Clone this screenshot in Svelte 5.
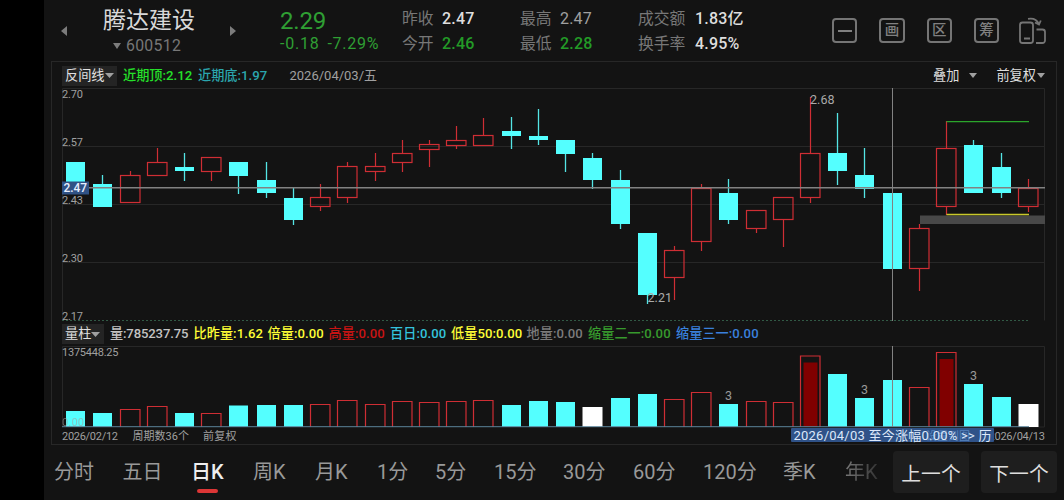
<script lang="ts">
type Candle = {
	high: number;
	top: number;
	bottom: number;
	low: number;
	up: boolean;
};

const STEP = 27.22;
const FIRST = 75.6;
const BASE = 427;
const cx = (i: number) => Math.floor(FIRST + i * STEP) + 0.5;

// d = falling (filled), u = rising (outlined); high, top, bottom, low on the canvas
const candles: Candle[] = [
	"d 162 162 184 184",
	"d 175 184 207 207",
	"u 171 175 203 203",
	"u 148 162 176 176",
	"d 153 167 171 181",
	"u 157 157 172 181",
	"d 162 162 176 194",
	"d 162 180 193 198",
	"d 188 198 220 225",
	"u 184 197 207 211",
	"u 162 166 198 203",
	"u 153 166 172 181",
	"u 140 153 163 172",
	"u 140 144 150 167",
	"u 126 140 146 149",
	"u 118 135 146 146",
	"d 117 131 136 149",
	"d 109 136 140 145",
	"d 140 140 154 172",
	"d 153 158 180 189",
	"d 170 180 224 229",
	"d 233 233 295 304",
	"u 246 250 278 300",
	"u 184 188 242 251",
	"d 179 193 220 224",
	"u 210 210 229 233",
	"u 197 197 220 247",
	"u 97 153 198 203",
	"d 113 153 171 185",
	"d 148 175 189 198",
	"d 193 193 269 269",
	"u 224 228 269 291",
	"u 121 148 207 215",
	"d 140 145 193 193",
	"d 153 167 193 198",
	"u 179 188 207 212",
].map((row) => {
	const [kind, ...rest] = row.split(" ");
	const [high, top, bottom, low] = rest.map(Number);
	return { high, top, bottom, low, up: kind === "u" };
});

const volumeTops = [
	411, 413, 409, 406, 413, 413, 405.5, 405, 405, 404, 400, 404, 401, 402, 401,
	400, 405, 401, 402, 407, 398, 394, 399, 392, 404, 401, 402, 355.5, 374, 398,
	380, 387, 352, 384, 397, 404,
];
const whiteBars = [19, 35];
const solidBars = [27, 32];
const marked = [24, 29, 33];

const prices = [
	{ text: "2.70", y: 98 },
	{ text: "2.57", y: 145.5 },
	{ text: "2.43", y: 204 },
	{ text: "2.30", y: 262 },
	{ text: "2.17", y: 320 },
];

const legend = [
	{ text: "量:785237.75", color: "#c4c4c4" },
	{ text: "比昨量:1.62", color: "#ffff36" },
	{ text: "倍量:0.00", color: "#ffff36" },
	{ text: "高量:0.00", color: "#c81414" },
	{ text: "百日:0.00", color: "#34c3dc" },
	{ text: "低量50:0.00", color: "#ffff36" },
	{ text: "地量:0.00", color: "#7c7c7c" },
	{ text: "缩量二一:0.00", color: "#379a2d" },
	{ text: "缩量三一:0.00", color: "#3a80dc" },
];

const stats = [
	{ label: "昨收", value: "2.47", tone: "bright" },
	{ label: "最高", value: "2.47", tone: "" },
	{ label: "成交额", value: "1.83亿", tone: "bright" },
	{ label: "今开", value: "2.46", tone: "green" },
	{ label: "最低", value: "2.28", tone: "green" },
	{ label: "换手率", value: "4.95%", tone: "bright" },
];

const tabs = ["分时", "五日", "日K", "周K", "月K", "1分", "5分", "15分", "30分", "60分", "120分", "季K", "年K"];
let active = $state("日K");
</script>

<div class="app">
	<header>
		<svg class="prev" width="6" height="10" viewBox="0 0 6 10"><path d="M6 0v10L0 5z" /></svg>
		<div class="stock">
			<div class="name">腾达建设</div>
			<div class="code">
				<svg width="8" height="6" viewBox="0 0 8 6"><path d="M0 0h8L4 6z" /></svg>600512
			</div>
		</div>
		<svg class="next" width="6" height="10" viewBox="0 0 6 10"><path d="M0 0v10l6-5z" /></svg>
		<div class="quote">
			<div class="last">2.29</div>
			<div class="change"><span>-0.18</span><span>-7.29%</span></div>
		</div>
		<div class="stats">
			{#each stats as s}
				<span class="label">{s.label}</span>
				<span class="value {s.tone}">{s.value}</span>
			{/each}
		</div>
		<div class="tools">
			<button aria-label="收起"><i class="minus"></i></button>
			<button>画</button>
			<button>区</button>
			<button>筹</button>
			<svg class="rotate" width="30" height="28" viewBox="0 0 30 28">
				<rect x="2" y="5.5" width="13" height="20.5" rx="2.5" />
				<path d="M6 21.5h6M18.5 12.5h6a2.5 2.5 0 0 1 2.5 2.5v8.5a2.5 2.5 0 0 1-2.5 2.5h-6.5M10 1.8c6-1 9 .8 10.7 5M17 5.5l4 2 1.8-4" />
			</svg>
		</div>
	</header>

	<main>
		<div class="toolbar">
			<button class="picker">反间线<svg width="9" height="5" viewBox="0 0 9 5"><path d="M0 0h9L4.5 5z" /></svg></button>
			<span class="peak">近期顶:2.12</span>
			<span class="trough">近期底:1.97</span>
			<span class="date">2026/04/03/五</span>
			<span class="overlay">叠加<svg width="8" height="5" viewBox="0 0 8 5"><path d="M0 0h8L4 5z" /></svg></span>
			<span class="adjust">前复权<svg width="8" height="5" viewBox="0 0 8 5"><path d="M0 0h8L4 5z" /></svg></span>
		</div>

		<svg class="chart" width="1004" height="234" viewBox="52 88 1004 234">
			<path class="grid" d="M62.5 88.5H1044.5V320.5M62.5 88.5V320.5M62.5 146.5H1044M62.5 204.5H1044M62.5 262.5H1044" />
			<path class="floor" d="M62 320.5H1029" />
			<rect x="920" y="215.5" width="125" height="8.5" fill="#484848" />
			{#each candles as c, i}
				{#if c.up}
					<path class="up" d="M{cx(i)} {c.high}V{c.top}M{cx(i)} {c.bottom}V{c.low}" />
					<rect class="up" x={cx(i) - 10} y={c.top + 0.5} width="19.5" height={c.bottom - c.top - 1} />
				{:else}
					<path class="wick" d="M{cx(i)} {c.high}V{c.low}" />
					<rect class="down" x={cx(i) - 9.5} y={c.top} width="19" height={c.bottom - c.top} />
				{/if}
			{/each}
			<path d="M946.5 121.7H1029" stroke="#2ba52b" stroke-width="1.3" />
			<path d="M946.5 214.5H1029" stroke="#c8c82a" stroke-width="1.3" />
			<path class="cross" d="M62 187.7H1045" stroke-width="1.4" />
			<path class="cross" d="M892.5 88V321" />
			{#each prices as p}
				<text class="scale" x="62" y={p.y} textLength="21">{p.text}</text>
			{/each}
			<text class="extreme" x="810" y="104" textLength="24.5">2.68</text>
			<text class="extreme" x="647.5" y="302" textLength="24.5">2.21</text>
			<rect x="62" y="181.5" width="27" height="13" fill="#305285" />
			<text class="current" x="63.5" y="192.3" textLength="23.5">2.47</text>
		</svg>

		<div class="legend">
			<button class="picker">量柱<svg width="9" height="5" viewBox="0 0 9 5"><path d="M0 0h9L4.5 5z" /></svg></button>
			{#each legend as item}
				<span style="color: {item.color}">{item.text}</span>
			{/each}
		</div>

		<svg class="chart" width="1004" height="98" viewBox="52 346 1004 98">
			<path class="grid" d="M62.5 427V346.5H1044.5V427H1029" />
			{#each volumeTops as top, i}
				{#if whiteBars.includes(i)}
					<rect x={cx(i) - 10} y={top} width="20" height={BASE - top} fill="#fff" />
				{:else if candles[i].up}
					<path class="up" d="M{cx(i) - 10} {BASE}V{top + 0.5}h19.5V{BASE}" />
					{#if solidBars.includes(i)}
						<rect x={cx(i) - 7} y={top + 7} width="14" height={BASE - top - 7} fill="#800000" />
					{/if}
				{:else}
					<rect class="down" x={cx(i) - 9.5} y={top} width="19" height={BASE - top} />
				{/if}
				{#if marked.includes(i)}
					<text class="mark" x={cx(i)} y={top - 4}>3</text>
				{/if}
			{/each}
			<path d="M62 426.7H1029" stroke="#5b8399" />
			<path class="cross" d="M892.5 346V427" />
			<text class="scale" x="62" y="355.5" textLength="56.5">1375448.25</text>
			<text class="scale" x="62" y="425.5" textLength="22" opacity="0.6">0.00</text>
			<text class="scale" x="62" y="440" textLength="56">2026/02/12</text>
			<text class="scale" x="132.5" y="440" textLength="56.5">周期数36个</text>
			<text class="scale" x="203" y="440" textLength="33.5">前复权</text>
			<text class="scale" x="988.5" y="440" textLength="56.5">2026/04/13</text>
			<rect x="791" y="428" width="203" height="14" rx="1" fill="#2f5288" />
			<text class="ghost" x="926" y="439.5" textLength="44">设置到图</text>
			<text class="since" x="793.5" y="439.5" textLength="198">2026/04/03 至今涨幅0.00% &gt;&gt; 历</text>
		</svg>
	</main>

	<nav>
		{#each tabs as tab}
			<button class="tab" class:active={tab === active} class:faded={tab === "年K"} onclick={() => (active = tab)}>
				<span>{tab}</span>
			</button>
		{/each}
		<button class="jump">上一个</button>
		<button class="jump">下一个</button>
	</nav>
</div>

<style>
	:global(body) {
		background: #000;
	}
	.app {
		box-sizing: border-box;
		width: 1020px;
		height: 500px;
		margin-left: 44px;
		background: #131313;
		color: #c8c8c8;
		font-family: Roboto, "Noto Sans CJK SC", sans-serif;
		overflow: hidden;
	}
	button {
		margin: 0;
		padding: 0;
		border: 0;
		background: none;
		color: inherit;
		font: inherit;
		letter-spacing: inherit;
	}
	header {
		display: grid;
		grid-template-columns: 16px 103px 64px 41px 121px 352px 1fr;
		height: 61px;
	}
	header svg {
		fill: #7c7c7c;
	}
	.prev,
	.next {
		margin-top: 26px;
	}
	.prev {
		justify-self: end;
		margin-right: -7px;
	}
	.stock {
		margin-left: 43px;
		white-space: nowrap;
	}
	.next {
		margin-left: 67px;
	}
	.name {
		height: 36px;
		font-size: 23px;
		line-height: 42px;
		color: #d8d8d8;
	}
	.code {
		display: flex;
		align-items: center;
		gap: 5px;
		margin-left: 10px;
		font-size: 15.8px;
		line-height: 20px;
		letter-spacing: 0.3px;
		color: #777;
	}
	.quote {
		grid-column: 5;
		margin-left: 12px;
		color: #2f9f33;
		white-space: nowrap;
	}
	.last {
		height: 34px;
		font-size: 24px;
		line-height: 43px;
		letter-spacing: -0.2px;
	}
	.change {
		display: flex;
		gap: 8px;
		font-size: 16px;
		line-height: 20px;
		letter-spacing: 0.75px;
	}
	.stats {
		display: grid;
		grid-template-columns: 40px 78px 40px 78px 57px 60px;
		grid-template-rows: 25px 25px;
		margin: 6px 0 0 13px;
		font-size: 16px;
		line-height: 26px;
		white-space: nowrap;
	}
	.label {
		font-size: 15.8px;
		color: #777;
	}
	.value {
		color: #a0a0a0;
		letter-spacing: 0.2px;
	}
	.bright {
		color: #dedede;
		font-weight: 500;
	}
	.green {
		color: #239b27;
		font-weight: 500;
	}
	.tools {
		display: flex;
		gap: 22px;
		margin: 18px 0 0 91px;
	}
	.tools button {
		box-sizing: border-box;
		display: flex;
		align-items: center;
		justify-content: center;
		flex: none;
		width: 25.3px;
		height: 25px;
		border: 2px solid #757575;
		border-radius: 4px;
		color: #808080;
		font-size: 14.5px;
		font-weight: 500;
		line-height: 20px;
	}
	.minus {
		width: 14px;
		height: 2px;
		background: #808080;
	}
	.tools .rotate {
		flex: none;
		margin: -1px 0 0 -3px;
		fill: none;
		stroke: #757575;
		stroke-width: 1.8;
	}
	main {
		box-sizing: border-box;
		width: 1006px;
		height: 384px;
		margin-left: 7px;
		border: 1px solid #272727;
	}
	.toolbar {
		display: flex;
		align-items: center;
		box-sizing: border-box;
		height: 26px;
		padding: 1px 0 0 10px;
		font-size: 13.2px;
		line-height: 20px;
		white-space: nowrap;
	}
	.picker {
		box-sizing: border-box;
		display: flex;
		align-items: center;
		flex: none;
		height: 20px;
		padding-left: 3px;
		background: #242424;
		color: #e0e0e0;
	}
	svg {
		display: block;
		flex: none;
		fill: #a0a0a0;
	}
	.toolbar .picker {
		width: 55px;
	}
	.peak {
		width: 75px;
		margin-left: 6px;
		color: #25e02a;
		font-weight: 500;
	}
	.trough {
		width: 91.5px;
		color: #2ba5ad;
		font-weight: 500;
	}
	.date {
		font-size: 13px;
		color: #a0a0a0;
	}
	.overlay,
	.adjust {
		display: flex;
		align-items: center;
		color: #dedede;
	}
	.overlay {
		gap: 10px;
		margin-left: auto;
	}
	.adjust {
		gap: 1px;
		margin: 0 11px 0 19px;
	}
	.chart text {
		font-family: Roboto, "Noto Sans CJK SC", sans-serif;
	}
	.grid {
		fill: none;
		stroke: #272727;
	}
	.floor {
		stroke: #315945;
		stroke-dasharray: 2 2;
	}
	.up {
		fill: none;
		stroke: #cf2e34;
		stroke-width: 1.2;
	}
	.down {
		fill: #54ffff;
	}
	.wick {
		stroke: #54e5e5;
		stroke-width: 1.3;
	}
	.cross {
		fill: none;
		stroke: #828282;
	}
	.scale {
		font-size: 11px;
		fill: #a0a0a0;
	}
	.extreme {
		font-size: 12.5px;
		fill: #aaa;
	}
	.current {
		font-size: 12px;
		font-weight: 500;
		fill: #e8efff;
	}
	.mark {
		font-size: 12.5px;
		fill: #999;
		text-anchor: middle;
	}
	.since {
		font-size: 13px;
		fill: #dce8fa;
	}
	.ghost {
		font-size: 11px;
		fill: #5682bd;
	}
	.legend {
		display: grid;
		grid-template-columns: 48px 83.5px 74px 61px 61.5px 61px 75.5px 61.5px 88px 90px;
		align-items: center;
		height: 24px;
		padding-left: 10px;
		font-size: 13.1px;
		line-height: 20px;
		letter-spacing: 0.1px;
		white-space: nowrap;
	}
	.legend .picker {
		width: 42px;
	}
	.legend span {
		font-weight: 500;
	}
	.legend span:nth-child(2) {
		letter-spacing: -0.12px;
	}
	nav {
		display: grid;
		grid-template-columns: 68.5px 68.5px 62px 62px 62px 58px 59px 69px 70px 70px 80px 62px 48px 76px 76px;
		height: 55px;
		padding-left: 10px;
	}
	.tab {
		display: flex;
		font-size: 20px;
		line-height: 55px;
		color: #999;
		white-space: nowrap;
	}
	.tab span {
		height: 47px;
	}
	.active {
		color: #eee;
		font-weight: 500;
	}
	.active span::after {
		content: "";
		display: block;
		width: 21px;
		height: 4px;
		margin: -11px auto 0;
		border-radius: 2px;
		background: #dc3636;
	}
	.faded span {
		color: transparent;
		background: linear-gradient(90deg, #777, #333);
		background-clip: text;
	}
	.jump {
		height: 42px;
		margin-top: 6px;
		border-radius: 4px;
		background: #1e1e1e;
		color: #dedede;
		font-size: 19.8px;
	}
	.jump:last-child {
		margin-left: 12px;
		margin-right: -12px;
	}
</style>
